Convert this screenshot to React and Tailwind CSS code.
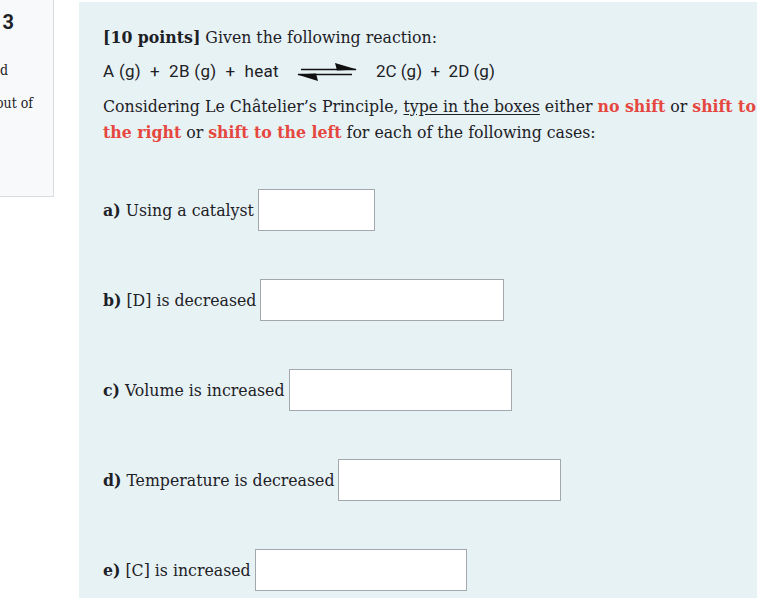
import React from 'react';

const serif = { fontFamily: '"DejaVu Serif Condensed", "DejaVu Serif", serif', fontStretch: 'condensed' };
const sans = { fontFamily: 'Roboto, sans-serif', fontStretch: 'normal' };

const Red = ({ children }) => <span className="font-bold text-[#e5473f]">{children}</span>;

const EqArrow = () => (
    <svg width="62" height="22" viewBox="0 0 62 22" className="ml-[17px] mr-[18px] shrink-0">
        <line x1="5" y1="8.5" x2="60" y2="8.5" stroke="#111" strokeWidth="1.4" />
        <polygon points="39,2 61,8.5 41,9.5" fill="#111" />
        <line x1="2" y1="13.5" x2="56" y2="13.5" stroke="#111" strokeWidth="1.4" />
        <polygon points="1,13.5 22,20 20,12.5" fill="#111" />
    </svg>
);

const Row = ({ letter, text, width }) => (
    <div className="flex items-center h-[42px]">
        <span><b>{letter})</b> {text}</span>
        <input type="text" className="ml-1 h-[42px] bg-white border border-[#a3a8ad] outline-none" style={{ width }} />
    </div>
);

const App = () => {
    return (
        <div className="flex w-[757px] h-[598px] overflow-hidden bg-white text-[#1d2125]">
            {/* question info card, cut off by the left edge */}
            <div className="w-[54px] h-[197px] shrink-0 overflow-hidden bg-[#f7f9fb] border-r border-b border-[#d9dde1]" style={serif}>
                <div className="flex justify-end pr-[39px] pt-[9px] whitespace-nowrap">
                    <span className="text-[20px] font-bold leading-[26px]" style={sans}>Question 3</span>
                </div>
                <div className="flex justify-end pr-[45px] mt-[25px] text-[14px] leading-[20px] whitespace-nowrap">answered</div>
                <div className="flex justify-end pr-[20px] mt-[13px] text-[14px] leading-[20px] whitespace-nowrap">Marked out of</div>
            </div>

            {/* question content */}
            <div className="ml-[25px] mt-[2px] flex-1 bg-[#e7f2f5] pl-[24px] pt-[22px] text-[17.5px]" style={serif}>
                <p className="leading-[26px] whitespace-nowrap"><b>[10 points]</b> Given the following reaction:</p>

                <div className="mt-[9px] flex items-center h-[26px] text-[17px] whitespace-pre" style={sans}>
                    <span className="tracking-[0.3px]">A (g)  +  2B (g)  +  heat</span>
                    <EqArrow />
                    <span>2C (g)  +  2D (g)</span>
                </div>

                <p className="mt-[8px] leading-[26px] whitespace-nowrap">
                    Considering Le Châtelier’s Principle, <span className="underline underline-offset-2">type in the boxes</span> either <Red>no shift</Red> or <Red>shift to</Red>
                    <br />
                    <Red>the right</Red> or <Red>shift to the left</Red> for each of the following cases:
                </p>

                <div className="mt-[44px] flex flex-col gap-[48px]">
                    <Row letter="a" text="Using a catalyst" width={117} />
                    <Row letter="b" text="[D] is decreased" width={244} />
                    <Row letter="c" text="Volume is increased" width={223} />
                    <Row letter="d" text="Temperature is decreased" width={223} />
                    <Row letter="e" text="[C] is increased" width={212} />
                </div>
            </div>
        </div>
    );
};

export default App;
